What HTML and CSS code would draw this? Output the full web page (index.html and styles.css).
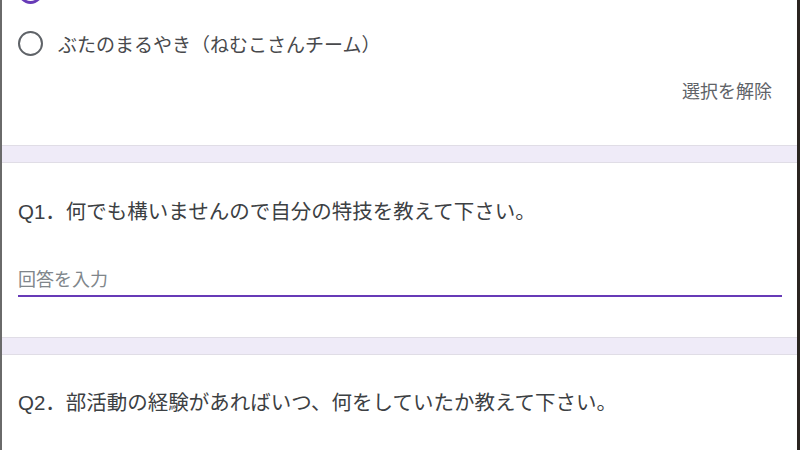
FILE: index.html
```html
<!DOCTYPE html>
<html lang="ja">
<head>
<meta charset="utf-8">
<link rel="stylesheet" href="styles.css">
</head>
<body>
<div class="frame">
  <div class="page">
    <section class="card card-first">
      <div class="option">
        <span class="radio radio-on"><span class="dot"></span></span>
        <span class="label"></span>
      </div>
      <div class="option">
        <span class="radio"></span>
        <span class="label">ぶたのまるやき（ねむこさんチーム）</span>
      </div>
      <div class="clear-row">
        <span class="clear">選択を解除</span>
      </div>
    </section>
    <section class="card card-q1">
      <div class="question">Q1．何でも構いませんので自分の特技を教えて下さい。</div>
      <div class="answer">回答を入力</div>
    </section>
    <section class="card card-q2">
      <div class="question">Q2．部活動の経験があればいつ、何をしていたか教えて下さい。</div>
    </section>
  </div>
</div>
</body>
</html>
```

FILE: styles.css
```css
html, body {
  margin: 0;
  padding: 0;
  height: 100%;
}
body {
  background: #2a2420;
  overflow: hidden;
  font-family: "Liberation Sans", Arial, "Noto Sans CJK JP", sans-serif;
}
.frame {
  height: 450px;
  display: flex;
  background: linear-gradient(to right, #6a6a6a 0, #6a6a6a 2px, transparent 2px);
}
.page {
  margin: 0 3px 0 2px;
  flex: 1;
  background: #efebf8;
  display: flex;
  flex-direction: column;
  gap: 16px;
  overflow: hidden;
}
.card {
  background: #ffffff;
  border-top: 1px solid #e0dde6;
  border-bottom: 1px solid #e0dde6;
  padding: 0 15px 0 16px;
}
.card-first {
  margin-top: -36px;
  padding-bottom: 34px;
}
.option {
  height: 52px;
  display: flex;
  align-items: center;
}
.radio {
  width: 25px;
  height: 25px;
  box-sizing: border-box;
  border: 2.5px solid #5f6368;
  border-radius: 50%;
  display: flex;
  align-items: center;
  justify-content: center;
  flex: none;
}
.radio-on {
  border: 3px solid #673ab7;
}
.dot {
  width: 12px;
  height: 12px;
  border-radius: 50%;
  background: #673ab7;
}
.label {
  margin-left: 15px;
  font-size: 19px;
  color: #48494c;
  font-family: "Noto Sans CJK JP", sans-serif;
}
.clear-row {
  height: 42px;
  display: flex;
  align-items: center;
  justify-content: flex-end;
  padding-right: 10px;
}
.clear {
  font-size: 18px;
  color: #5f6368;
  font-family: "Noto Sans CJK JP", sans-serif;
}
.card-q1 {
  padding-top: 35px;
  padding-bottom: 40px;
}
.question {
  font-size: 20.5px;
  line-height: 28px;
  color: #3c4043;
}
.answer {
  margin-top: 40px;
  font-size: 18px;
  line-height: 24px;
  padding-bottom: 5px;
  color: #80868b;
  border-bottom: 2px solid #673ab7;
  font-family: "Noto Sans CJK JP", sans-serif;
}
.card-q2 {
  padding-top: 34px;
  flex: 1;
  border-bottom: none;
}
```
